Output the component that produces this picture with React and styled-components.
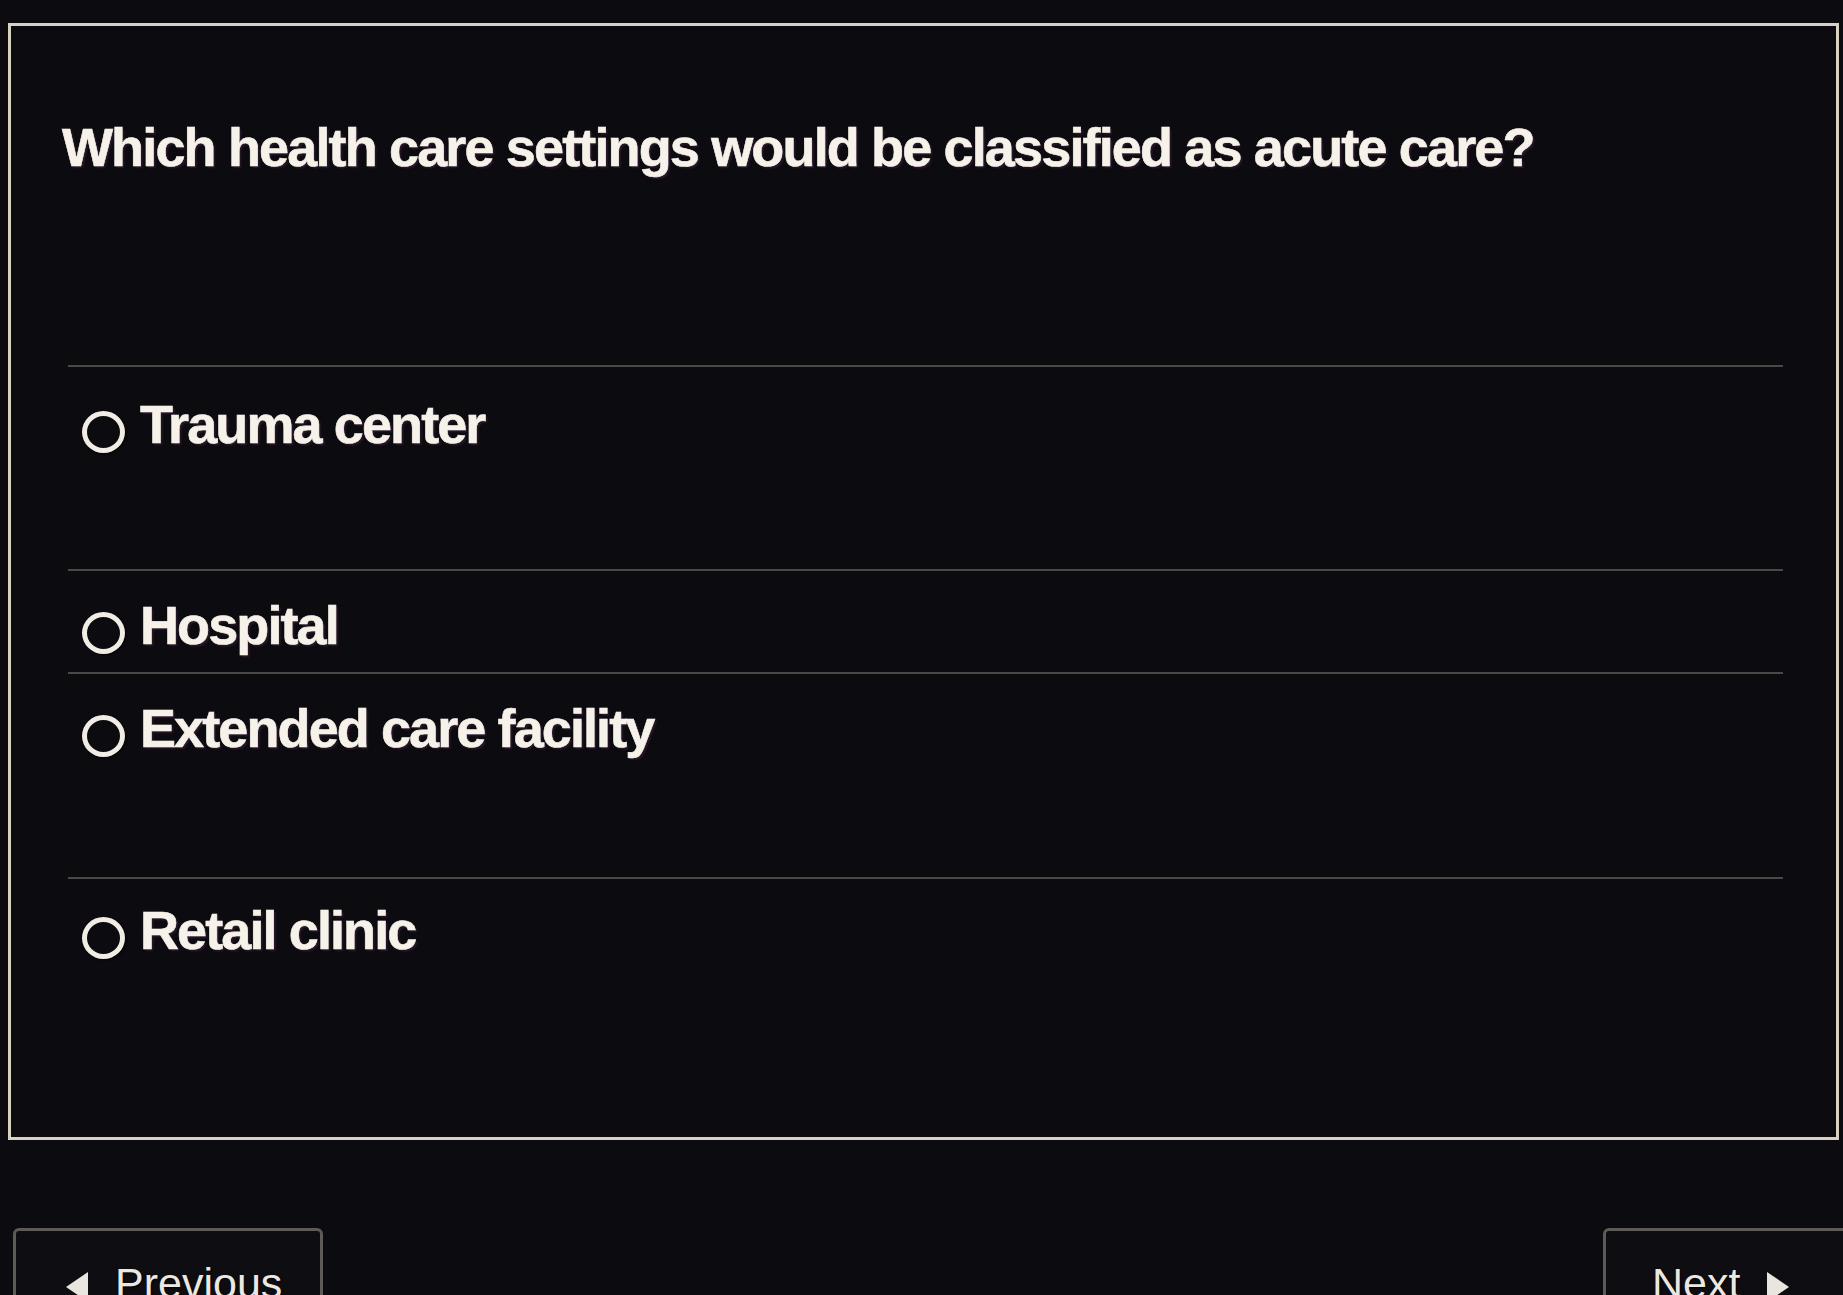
import React from "react";
import styled, { createGlobalStyle } from "styled-components";

const GlobalStyle = createGlobalStyle`
    html, body {
        margin: 0;
        padding: 0;
        background: #0c0b0f;
        overflow: hidden;
    }
    body {
        font-family: "Liberation Sans", Arial, Helvetica, sans-serif;
        color: #f5f1e8;
    }
`

const options = [
    { label: "Trauma center", height: 204, pad: 25 },
    { label: "Hospital", height: 103, pad: 22 },
    { label: "Extended care facility", height: 205, pad: 22 },
    { label: "Retail clinic", height: 0, pad: 19 },
]

function App() {
    return (
        <PageStyled>
            <GlobalStyle />

            <PanelStyled>
                <QuestionStyled>Which health care settings would be classified as acute care?</QuestionStyled>

                <OptionListStyled>
                    {options.map((option) => (
                        <OptionStyled key={option.label} $height={option.height} $pad={option.pad}>
                            <RadioStyled />
                            <OptionTextStyled>{option.label}</OptionTextStyled>
                        </OptionStyled>
                    ))}
                </OptionListStyled>
            </PanelStyled>

            <FooterStyled>
                <NavButtonStyled $pad="25px 0 0 50px">
                    <svg width="22" height="30" viewBox="0 0 22 30">
                        <polygon points="22,0 22,30 0,15" fill="#e9e6df" />
                    </svg>
                    <span>Previous</span>
                </NavButtonStyled>
                <NavButtonStyled $pad="25px 0 0 46px">
                    <span>Next</span>
                    <svg width="22" height="30" viewBox="0 0 22 30">
                        <polygon points="0,0 0,30 22,15" fill="#e9e6df" />
                    </svg>
                </NavButtonStyled>
            </FooterStyled>
        </PageStyled>
    )
}

const PageStyled = styled.div`
    width: 1843px;
    height: 1295px;
    overflow: hidden;
    padding-top: 23px;
    box-sizing: border-box;
`

const PanelStyled = styled.div`
    height: 1117px;
    box-sizing: border-box;
    margin: 0 4px 0 8px;
    border: 3px solid #d8d2c3;
    display: flex;
    flex-direction: column;
`

const QuestionStyled = styled.h1`
    margin: 0;
    padding: 89px 0 0 51px;
    height: 339px;
    box-sizing: border-box;
    font-size: 54px;
    line-height: 64px;
    font-weight: 700;
    letter-spacing: -1.85px;
    color: #f6f2ea;
    -webkit-text-stroke: 0.6px #f6f2ea;
    text-shadow: 2px 2px 2px rgba(45, 25, 45, 0.9);
`

const OptionListStyled = styled.div`
    display: flex;
    flex-direction: column;
    flex: 1;
    margin: 0 53px 0 57px;
`

const OptionStyled = styled.div`
    display: flex;
    align-items: flex-start;
    gap: 15px;
    box-sizing: border-box;
    border-top: 2px solid #4a4946;
    padding: ${(props) => props.$pad}px 0 0 14px;
    height: ${(props) => (props.$height ? `${props.$height}px` : "auto")};
    flex: ${(props) => (props.$height ? "none" : "1")};
`

const RadioStyled = styled.span`
    width: 43px;
    height: 42px;
    box-sizing: border-box;
    margin-top: 19px;
    border: 5.5px solid #f1ede5;
    border-radius: 50%;
    flex: none;
    box-shadow: 1px 1px 2px rgba(0, 0, 0, 0.8);
`

const OptionTextStyled = styled.span`
    font-size: 54px;
    line-height: 64px;
    font-weight: 700;
    letter-spacing: -1.9px;
    color: #f6f2ea;
    -webkit-text-stroke: 0.6px #f6f2ea;
    text-shadow: 2px 2px 2px rgba(45, 25, 45, 0.9);
`

const FooterStyled = styled.div`
    display: flex;
    justify-content: space-between;
    align-items: flex-start;
    width: 1913px;
    padding: 88px 0 0 13px;
    box-sizing: border-box;
`

const NavButtonStyled = styled.div`
    width: 310px;
    height: 110px;
    box-sizing: border-box;
    border: 3px solid #5e5b56;
    border-radius: 6px;
    background: #0e0d11;
    display: flex;
    align-items: flex-start;
    gap: 27px;
    padding: ${(props) => props.$pad};
    font-size: 43px;
    line-height: 54px;
    color: #ece8e1;
    text-shadow: 1px 1px 2px rgba(0, 0, 0, 0.9);

    svg {
        margin-top: 16px;
        flex: none;
    }
`

export default App
